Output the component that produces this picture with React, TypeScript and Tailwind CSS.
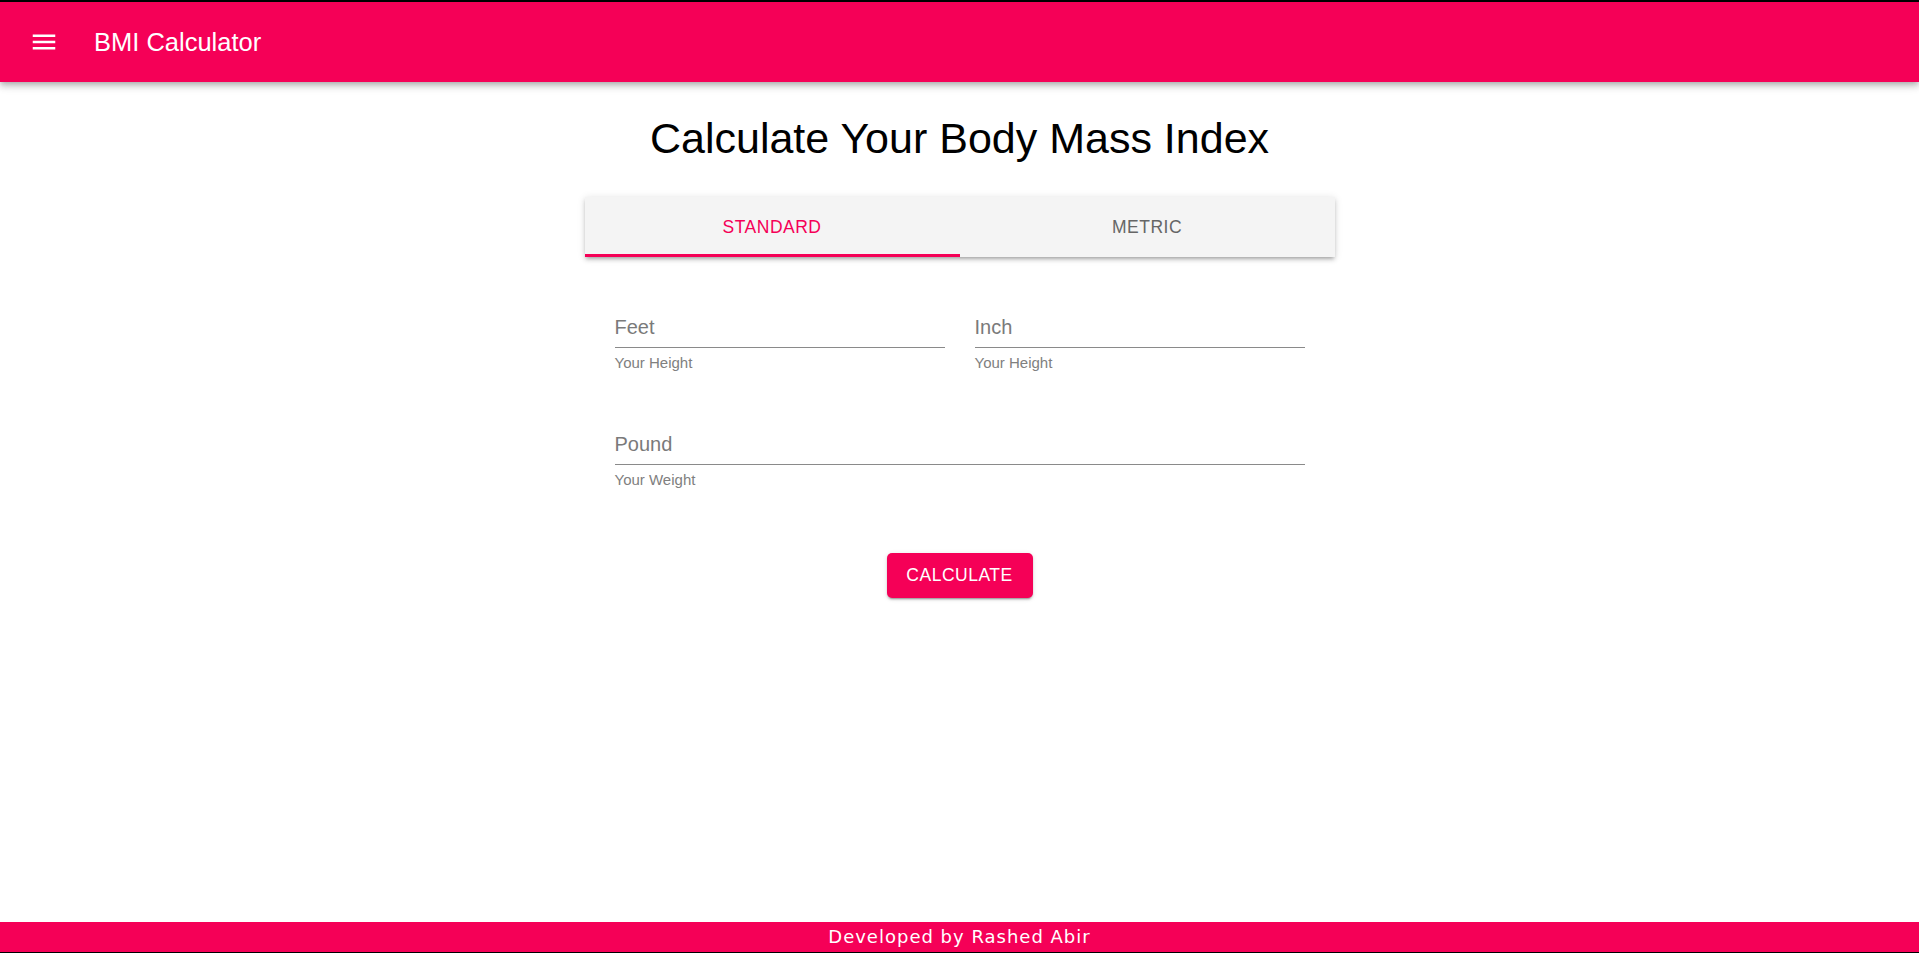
import React, { useState } from "react";

const PINK = "#f50057";

function MenuIcon() {
  return (
    <svg width="30" height="30" viewBox="0 0 24 24" fill="white" aria-hidden>
      <path d="M3 18h18v-2H3v2zm0-5h18v-2H3v2zm0-7v2h18V6H3z" />
    </svg>
  );
}

function Field({ label, helper }: { label: string; helper: string }) {
  return (
    <div className="flex flex-col w-full">
      <input
        placeholder={label}
        className="block w-full h-[35px] pb-[5px] text-[20px] leading-[28px] text-[#222] placeholder:text-[#7a7a7a] border-b border-[#8a8a8a] outline-none bg-transparent"
        style={{ fontFamily: '"Liberation Sans", Arial, sans-serif' }}
      />
      <div className="mt-[2px] mb-[1px] text-[15px] leading-[25px] text-[#808080]">{helper}</div>
    </div>
  );
}

export default function App() {
  const [tab, setTab] = useState(0);
  return (
    <div
      className="h-[953px] w-full flex flex-col bg-white border-t-2 border-black"
      style={{ fontFamily: '"Liberation Sans", Arial, Helvetica, sans-serif' }}
    >
      <header className="relative z-10 h-[80px] shrink-0 bg-[#f50057] flex items-center pl-[29px] shadow-[0_2.5px_5px_-1.25px_rgba(0,0,0,0.2),0_5px_6px_0_rgba(0,0,0,0.14),0_1.25px_12.5px_0_rgba(0,0,0,0.12)]">
        <MenuIcon />
        <h1 className="ml-[35px] text-[25.5px] leading-[30px] text-white">BMI Calculator</h1>
      </header>

      <main className="flex-1 flex flex-col items-center">
        <h2 className="mt-[30px] text-[43px] leading-[52.5px] text-black">Calculate Your Body Mass Index</h2>

        <div className="mt-[32px] w-[750px] bg-[#f4f4f4] flex shadow-[0_3px_3px_-2px_rgba(0,0,0,0.2),0_3px_4px_0_rgba(0,0,0,0.14),0_1px_8px_0_rgba(0,0,0,0.12)]">
          {["Standard", "Metric"].map((t, i) => (
            <button
              key={t}
              onClick={() => setTab(i)}
              className={
                "relative flex-1 h-[60px] pt-[1px] flex items-center justify-center uppercase text-[17.5px] tracking-[0.5px] " +
                (tab === i ? "text-[#f50057]" : "text-[#666]")
              }
            >
              {t}
              {tab === i && <span className="absolute left-0 right-0 bottom-0 h-[2.5px] bg-[#f50057]" />}
            </button>
          ))}
        </div>

        <div className="w-[750px] px-[30px] mt-[56px] flex flex-col">
          <div className="flex gap-[30px]">
            <Field label="Feet" helper="Your Height" />
            <Field label="Inch" helper="Your Height" />
          </div>
          <div className="mt-[54px]">
            <Field label="Pound" helper="Your Weight" />
          </div>
        </div>

        <button
          className="mt-[60px] w-[146px] h-[45px] rounded-[5px] text-white uppercase text-[17.5px] tracking-[0.5px] shadow-[0_3px_1px_-2px_rgba(0,0,0,0.2),0_2px_2px_0_rgba(0,0,0,0.14),0_1px_5px_0_rgba(0,0,0,0.12)]"
          style={{ backgroundColor: PINK }}
        >
          Calculate
        </button>
      </main>

      <footer
        className="h-[30px] shrink-0 bg-[#f50057] flex items-center justify-center text-white text-[18px] leading-[30px] tracking-[1px]"
        style={{ fontFamily: '"DejaVu Sans", "Open Sans", sans-serif' }}
      >
        Developed by Rashed Abir
      </footer>
      <div className="h-[1px] shrink-0 bg-black" />
    </div>
  );
}
